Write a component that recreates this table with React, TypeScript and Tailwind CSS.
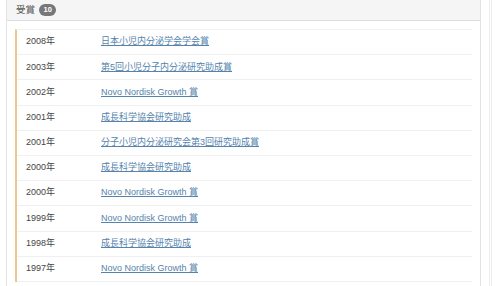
import React from "react";

const rows: [string, string][] = [
  ["2008年", "日本小児内分泌学会学会賞"],
  ["2003年", "第5回小児分子内分泌研究助成賞"],
  ["2002年", "Novo Nordisk Growth 賞"],
  ["2001年", "成長科学協会研究助成"],
  ["2001年", "分子小児内分泌研究会第3回研究助成賞"],
  ["2000年", "成長科学協会研究助成"],
  ["2000年", "Novo Nordisk Growth 賞"],
  ["1999年", "Novo Nordisk Growth 賞"],
  ["1998年", "成長科学協会研究助成"],
  ["1997年", "Novo Nordisk Growth 賞"],
];

export default function App() {
  return (
    <div
      className="w-[500px] h-[286px] overflow-hidden bg-white flex"
      style={{ fontFamily: '"Liberation Sans", "Noto Sans CJK JP", sans-serif' }}
    >
      <div className="ml-[6px] w-[475px] border-x border-[#e3e3e3] flex flex-col shrink-0">
        <div className="h-[21px] bg-[#f5f5f5] border-b border-[#dedede] flex items-center pl-[9px] gap-[4px]">
          <span className="text-[9.5px] text-[#555]">受賞</span>
          <span className="h-[12px] px-[4.5px] rounded-full bg-[#777] text-white text-[7.5px] font-bold flex items-center leading-none">
            10
          </span>
        </div>
        <div className="pt-[8px] pl-[8px] pr-[8px]">
          <div className="border-l-2 border-[#e9c98f] border-t border-t-[#f2f2f2]">
            {rows.map(([y, t], i) => (
              <div
                key={i}
                className="h-[25.2px] border-b border-[#f0f0f0] flex items-center pl-[9px] text-[9px]"
              >
                <span className="w-[75px] text-[#444]">{y}</span>
                <a className="text-[#5583ad] underline">{t}</a>
              </div>
            ))}
          </div>
        </div>
      </div>
      <div className="ml-[8px] w-[3px] border-x border-[#eeeeee] shrink-0" />
    </div>
  );
}
